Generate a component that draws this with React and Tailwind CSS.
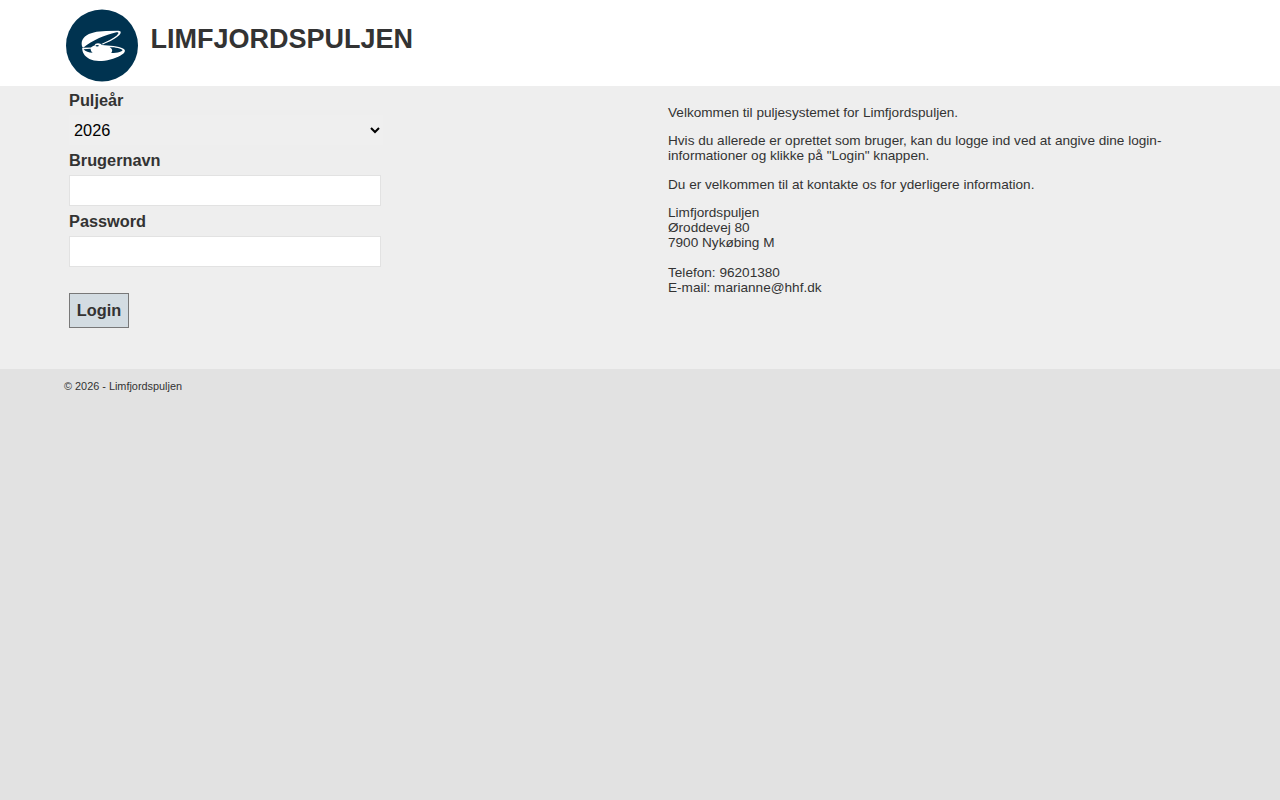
import { useState } from 'react';

const Logo = () => (
  <svg className="w-[72px] h-[73px]" viewBox="0 0 72 73" aria-hidden="true">
    <circle cx="36" cy="36.5" r="36" fill="#003350" />
    {/* upper shell */}
    <path
      d="M16.4 38C15 34.5 15.6 30.5 19 27.5C23.5 23.7 31 22.3 40 22L52.5 21.8C55.2 22 55.4 23.8 53.4 26C50 29.6 43.5 32.6 37 35.4L35.4 34.9C41 32.4 47 29.6 50.8 26.4C53.6 23.8 52.6 22.9 49.5 23.5C40.5 25.4 25.5 31.6 17.5 38.4Z"
      fill="#fff"
    />
    {/* lower shell */}
    <path
      d="M16.2 38.8L25 38.6C26.2 37.4 27.4 36.8 28.6 36.5C29 35 30.2 34.3 32 34.3C34 34.3 35.2 35.1 35.8 36.1C43 36.4 53 37.6 57 39.4C60.6 41.2 58.8 44 54.6 46.4C48.5 49.8 40.5 52 33 52C25.8 52 20 49.2 17.6 44.6C16.6 42.8 16.2 40.8 16.2 38.8Z"
      fill="#fff"
    />
    <path d="M17.5 40.3L24.6 39.7C24.7 41.4 25.3 42.8 26.7 43.8C22.8 43.6 19.4 42.4 17.5 40.3Z" fill="#003350" />
    <path d="M43.6 38C49.4 38.3 55.4 39.4 56.4 41C57 42.6 52 43.8 45.2 44C46.8 42 46.6 39.8 43.6 38Z" fill="#003350" />
    <ellipse cx="31.2" cy="36.7" rx="1.7" ry="0.8" fill="#003350" />
  </svg>
);

const LoginForm = () => {
  const [formData, setFormData] = useState({ year: '2026', username: '', password: '' });

  const handleChange = (e) => {
    setFormData({ ...formData, [e.target.name]: e.target.value });
  };

  return (
    <form
      className="w-[604px] pl-[5px] pt-1 flex flex-col items-start text-[16.32px] leading-5 font-bold"
      onSubmit={(e) => e.preventDefault()}
    >
      <label htmlFor="year">Puljeår</label>
      <select
        id="year"
        name="year"
        value={formData.year}
        onChange={handleChange}
        className="mt-[5px] w-[314px] h-[30px] p-px bg-[#efefef] text-black text-[16.32px] font-normal"
      >
        <option value="2026">2026</option>
      </select>

      <label htmlFor="username" className="mt-[5px]">Brugernavn</label>
      <input
        id="username"
        name="username"
        type="text"
        value={formData.username}
        onChange={handleChange}
        className="mt-[5px] w-[312px] h-[31px] px-[5px] bg-white border border-[#e2e2e2] font-normal"
      />

      <label htmlFor="password" className="mt-[5px]">Password</label>
      <input
        id="password"
        name="password"
        type="password"
        value={formData.password}
        onChange={handleChange}
        className="mt-[5px] w-[312px] h-[31px] px-[5px] bg-white border border-[#e2e2e2] font-normal"
      />

      <button
        type="submit"
        className="mt-[26px] w-[60px] h-[35px] pb-px bg-[#d3dce2] border border-[#787878] font-bold"
      >
        Login
      </button>
    </form>
  );
};

const Welcome = () => (
  <div className="w-[500px] pt-[18.6px] text-[13.6px] leading-[15px] space-y-[13.6px]">
    <p>Velkommen til puljesystemet for Limfjordspuljen.</p>
    <p>
      Hvis du allerede er oprettet som bruger, kan du logge ind ved at angive dine login-informationer og klikke på "Login" knappen.
    </p>
    <p>Du er velkommen til at kontakte os for yderligere information.</p>
    <p>
      Limfjordspuljen<br />
      Øroddevej 80<br />
      7900 Nykøbing M<br />
      <br />
      Telefon: 96201380<br />
      E-mail: marianne@hhf.dk
    </p>
  </div>
);

const App = () => {
  return (
    <div className="min-h-screen bg-[#e2e2e2] text-[#333] font-['Liberation_Sans',Arial,sans-serif]">
      <header className="h-[86px] bg-white px-[66px] pt-[9px] flex items-start">
        <Logo />
        <h1 className="ml-[12.5px] mt-[15px] text-[27px] leading-[31px] font-bold">LIMFJORDSPULJEN</h1>
      </header>

      <main className="h-[283px] bg-[#eee] px-16 flex items-start">
        <LoginForm />
        <Welcome />
      </main>

      <footer className="px-16 pt-[11px] text-[10.88px] leading-3">
        <p>© 2026 - Limfjordspuljen</p>
      </footer>
    </div>
  );
};

export default App;
